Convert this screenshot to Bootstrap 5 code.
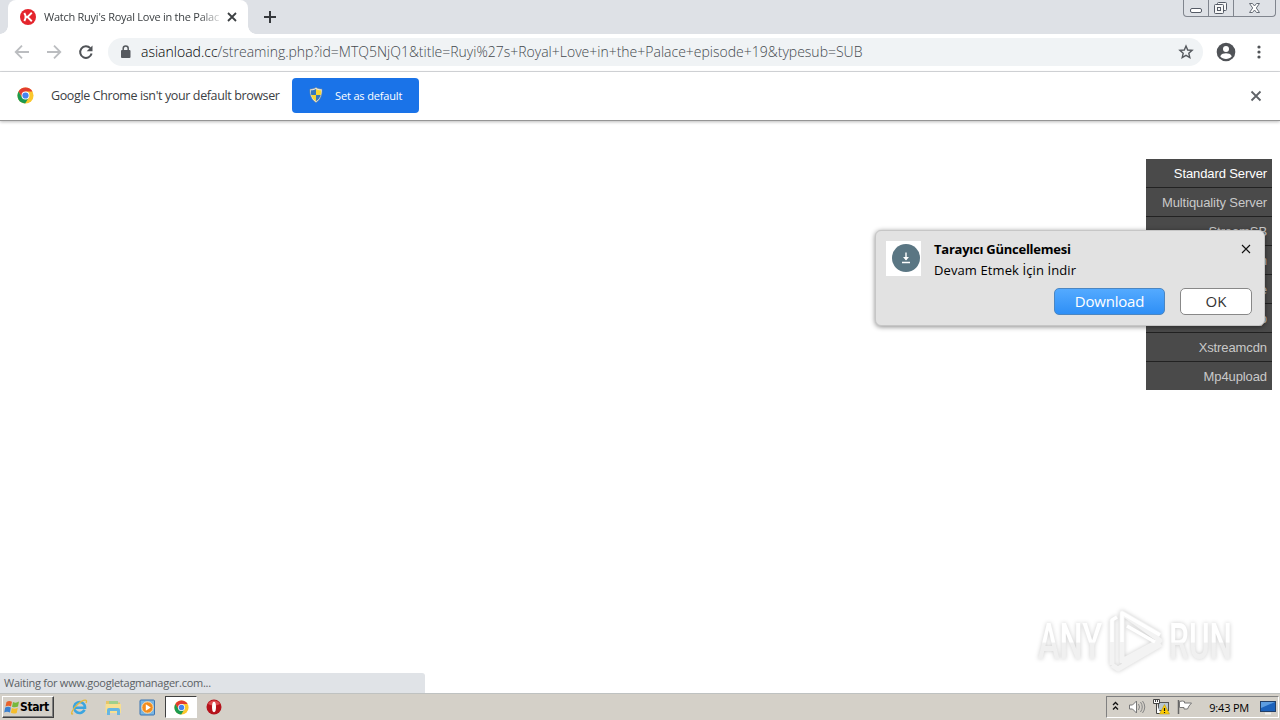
<!DOCTYPE html>
<html lang="en">
<head>
  <meta charset="UTF-8">
  <title>Watch Ruyi's Royal Love in the Palace</title>
  <link href="https://cdn.jsdelivr.net/npm/bootstrap@5.3.3/dist/css/bootstrap.min.css" rel="stylesheet">
  <style>
    body { width: 1280px; height: 720px; font-family: "Open Sans", "Noto Sans", sans-serif; color: #3c4043; line-height: 1; }
    svg { display: block; flex: none; }

    /* browser */
    .tabstrip { height: 34px; background: #dee1e6; padding-left: 8px; }
    .tab-active { width: 240px; height: 34px; background: #fff; border-radius: 8px 8px 0 0; padding: 0 10px 0 12px; }
    .tab-active::before, .tab-active::after { content: ""; position: absolute; bottom: 0; width: 8px; height: 8px; }
    .tab-active::before { left: -8px; background: radial-gradient(circle at 0 0, transparent 7.5px, #fff 8px); }
    .tab-active::after { right: -8px; background: radial-gradient(circle at 100% 0, transparent 7.5px, #fff 8px); }
    .tab-title { width: 175px; margin-left: 8px; font-size: 11px; letter-spacing: -.25px; line-height: 16px;
      -webkit-mask-image: linear-gradient(90deg, #000 155px, transparent 180px); }
    .winbtns { width: 93px; height: 17px; margin-right: 4px; border: 1px solid #80858e; border-top: 0; border-radius: 0 0 4px 4px; }
    .winbtns div + div { border-left: 1px solid #80858e; }
    .toolbar { height: 38px; border-bottom: 1px solid #d8dadd; padding: 0 13px 2px 14px; }
    .omnibox { height: 28px; width: 1095px; margin-left: 14px; padding: 0 9px 0 11px; background: #f0f3f5; border-radius: 14px; }
    .url { font-size: 14px; font-weight: 300; margin-left: 9px; line-height: 20px; color: #44494e; }
    .url b { font-weight: 300; color: #000; }
    .infobar { height: 49px; padding: 0 18px 1px 17px; border-bottom: 1px solid #959595; font-size: 13px; box-shadow: 0 1px 3px #0004; z-index: 1; }
    .infobar .msg { width: 241px; margin-left: 17px; padding-top: 2px; font-size: 12.5px; letter-spacing: -.38px; }
    .btn-default { width: 127px; height: 35px; background: #1a73e8; color: #fff; border-radius: 4px; font-size: 11px; border: 0; padding: 0 0 1px 16px; letter-spacing: -.15px; }

    /* page */
    .servers { width: 126px; right: 8px; top: 38px; background: #4a4a4a; color: #c9c9c9; font: 13px/29px "Liberation Sans", sans-serif; letter-spacing: -.1px; }
    .servers li { height: 28px; padding-right: 5px; box-sizing: content-box; }
    .servers li + li { border-top: 1px solid #222; }
    .servers .current { color: #fff; }
    .notice { width: 390px; height: 96px; left: 875px; top: 109px; background: #e2e2e2; border: 1px solid #c6c6c6; border-radius: 6px; box-shadow: 0 1px 5px #0007; color: #000; padding: 10px 12px 9px 10px; font-size: 13px; }
    .notice .pic { width: 35px; height: 35px; background: #fff; padding: 3px 1px 0 6px; }
    .notice .txt { margin-left: 13px; line-height: 21px; margin-top: -2px; }
    .notice .txt b { font-weight: 700; letter-spacing: -.25px; }
    .notice .txt span { letter-spacing: .1px; }
    .notice .acts { gap: 15px; margin-top: 7px; }
    .notice .btn { height: 27px; border: 1px solid #888; border-radius: 5px; padding: 0; font-size: 15px; line-height: 25px; }
    .btn-dl { width: 111px; background: linear-gradient(#54aaff, #2e8ff6); color: #fff; letter-spacing: -.2px; }
    .btn-dl.btn { border-color: #4b86c2; }
    .btn-ok { width: 72px; background: #fff; color: #333; }
    .watermark { left: 1030px; top: 483px; filter: drop-shadow(0 0 2px #0003); }
    .status { width: 425px; height: 20px; bottom: 0; left: 0; background: #e0e3e7; border-radius: 0 3px 0 0; padding-left: 4px; font-size: 11px; line-height: 20px; letter-spacing: -.26px; color: #5b5f64; }

    /* taskbar */
    .taskbar { height: 27px; background: #d4d0c8; border-top: 1px solid #bfc2c1; padding: 0 1px 0 2px; color: #000; font-size: 11px; }
    .raised { border: 1px solid; border-color: #fff #404040 #404040 #fff; box-shadow: inset -1px -1px #808080; }
    .start { width: 52px; height: 22px; font: bold 12px "DejaVu Sans Condensed", sans-serif; letter-spacing: -.4px; padding-left: 1px; }
    .pressed { width: 32px; height: 22px; background: #fff; border: 1px solid; border-color: #404040 #fff #fff #404040; }
    .quick { gap: 17px; margin-left: 17px; }
    .tray { width: 173px; height: 22px; border: 1px solid; border-color: #808080 #fff #fff #808080; padding: 0 2px 0 5px; }
    .clock { margin-right: 11px; letter-spacing: -.2px; }
  </style>
</head>
<body class="d-flex flex-column overflow-hidden bg-white">

  <svg width="0" height="0" class="position-absolute">
    <symbol id="chrome" viewBox="0 0 18 18">
      <circle cx="9" cy="9" r="8.5" fill="#fbc72d"/>
      <path d="M1.6 4.8A8.5 8.5 0 0 1 16.4 4.8H9L5.4 11Z" fill="#e23c30"/>
      <path d="M1.6 4.8A8.5 8.5 0 0 0 8.600 17.5L12.6 11H5.4Z" fill="#1b9a50"/>
      <circle cx="9" cy="9" r="4.2" fill="#fff"/>
      <circle cx="9" cy="9" r="3.3" fill="#4583ef"/>
    </symbol>
  </svg>

  <div class="tabstrip d-flex align-items-center flex-shrink-0">
    <div class="tab-active position-relative d-flex align-items-center">
      <svg width="16" height="16" viewBox="0 0 16 16"><circle cx="8" cy="8" r="8" fill="#e4252d"/><path d="M4.300 4 5.500 6.500v3L4.300 12M11.800 3.800 7.500 8l4.300 4.200M5.500 8H8" fill="none" stroke="#fff" stroke-width="1.900"/></svg>
      <div class="tab-title text-nowrap overflow-hidden">Watch Ruyi's Royal Love in the Palac</div>
      <svg class="ms-auto me-0" width="12" height="12" viewBox="0 0 12 12"><path d="m2 2 8 8m0-8-8 8" stroke="#3c4043" stroke-width="1.8"/></svg>
    </div>
    <svg style="margin-left:16px" width="12" height="12" viewBox="0 0 12 12"><path d="M6 0v12M0 6h12" stroke="#35383c" stroke-width="2"/></svg>
    <div class="winbtns d-flex ms-auto align-self-start">
      <div class="d-flex"><svg width="24" height="16" viewBox="0 0 24 16"><rect x="6.5" y="8.500" width="11" height="4" rx="1.500" fill="#fff" stroke="#555b66"/></svg></div>
      <div class="d-flex"><svg width="24" height="16" viewBox="0 0 24 16" fill="#f7f7f7" stroke="#555b66"><rect x="8.500" y="2.500" width="9" height="8" rx="1"/><rect x="5.500" y="4.500" width="9" height="9" rx="1"/><rect x="8.500" y="7.500" width="3" height="3"/></svg></div>
      <div class="d-flex"><svg width="40" height="16" viewBox="0 0 40 16"><path d="M15.500 3.500h3l2 2.500 2-2.500h3L22.300 8l3.200 4.500h-3L20.500 10l-2 2.500h-3L18.700 8Z" fill="#fff" stroke="#666c76"/></svg></div>
    </div>
  </div>

  <div class="toolbar d-flex align-items-center flex-shrink-0">
    <svg width="80" height="16" viewBox="0 0 80 16" fill="none" stroke-width="1.8">
      <path d="M15 8H2M8 1.700 1.700 8 8 14.300M33 8h13M40 1.700 46.300 8 40 14.300" stroke="#bbbdc0"/>
      <path d="M76.300 4.200A5.800 5.800 0 1 0 77.600 9.500" stroke="#505357" stroke-width="2"/>
      <path d="M78.500 1.500v5.800h-5.800Z" fill="#505357"/>
    </svg>
    <div class="omnibox d-flex align-items-center">
      <svg width="13" height="14" viewBox="0 0 13 14"><rect x="2" y="5" width="9.500" height="8" rx="1" fill="#55595e"/><path d="M4.200 5.500v-2a2.500 2.500 0 0 1 5 0v2" fill="none" stroke="#55595e" stroke-width="1.500"/></svg>
      <div class="url text-nowrap"><b>asianload.cc</b>/streaming.php?id=MTQ5NjQ1&amp;title=Ruyi%27s+Royal+Love+in+the+Palace+episode+19&amp;typesub=SUB</div>
      <svg class="ms-auto" width="16" height="16" viewBox="0 0 16 16"><path d="m8 2 1.700 4 4.400.4-3.300 2.900 1 4.300L8 11.300l-3.800 2.300 1-4.300-3.300-2.900L6.300 6Z" fill="none" stroke="#55595e" stroke-width="1.400"/></svg>
    </div>
    <svg class="ms-auto" width="20" height="20" viewBox="0 0 20 20"><circle cx="10" cy="10" r="9.300" fill="#505357"/><circle cx="10" cy="7" r="3" fill="#fff"/><path d="M4.200 14.200c1-2.300 3.700-2.900 5.800-2.900s4.800.6 5.800 2.900c-1.300 1.700-3.600 2.800-5.800 2.800s-4.500-1.100-5.800-2.800Z" fill="#fff"/></svg>
    <svg style="margin:0 6px 0 21px" width="4" height="14" viewBox="0 0 4 14" fill="#505357"><circle cx="2" cy="2" r="1.600"/><circle cx="2" cy="7" r="1.600"/><circle cx="2" cy="12" r="1.600"/></svg>
  </div>

  <div class="infobar position-relative d-flex align-items-center flex-shrink-0 bg-white">
    <svg width="17" height="17"><use href="#chrome"/></svg>
    <div class="msg text-nowrap">Google Chrome isn't your default browser</div>
    <button class="btn-default d-flex align-items-center">
      <svg width="16" height="16" viewBox="0 0 16 16"><path d="M8 .5c2 1.300 4 1.700 6 1.600.3 6-1.500 10.500-6 13.400C3.500 12.600 1.700 8.100 2 2.100 4 2.200 6 1.800 8 .5Z" fill="#eee" stroke="#8a8f80" stroke-width=".6"/><path d="M8 2v6H3.200c-.3-1.500-.4-3-.3-4.700C5 3.300 6.500 2.900 8 2Z" fill="#3477be"/><path d="M8 2c1.500.9 3 1.300 5.100 1.300.1 1.700 0 3.200-.3 4.700H8Z" fill="#f6d534"/><path d="M8 8v6.300C5.500 12.700 3.900 10.600 3.200 8Z" fill="#f6d534"/><path d="M8 8v6.300c2.500-1.600 4.100-3.700 4.800-6.300Z" fill="#3477be"/></svg>
      <span style="margin-left:11px">Set as default</span>
    </button>
    <svg class="ms-auto" width="12" height="12" viewBox="0 0 12 12"><path d="m1.500 1.500 9 9m0-9-9 9" stroke="#5f6368" stroke-width="1.800"/></svg>
  </div>

  <main class="position-relative flex-grow-1">
    <ul class="servers position-absolute list-unstyled text-end m-0">
      <li class="current">Standard Server</li>
      <li>Multiquality Server</li>
      <li>StreamSB</li>
      <li>Doodstream</li>
      <li>Streamtape</li>
      <li>Mixdrop</li>
      <li>Xstreamcdn</li>
      <li>Mp4upload</li>
    </ul>

    <div class="notice position-absolute">
      <div class="d-flex">
        <div class="pic"><svg width="28" height="28" viewBox="0 0 28 28"><circle cx="14" cy="14" r="14" fill="#5a7683"/><path d="M14 8.500v7M10 18.500h8" stroke="#fff" stroke-width="1.400"/><path d="M11 13h6l-3 3.500Z" fill="#fff"/></svg></div>
        <div class="txt"><b>Tarayıcı Güncellemesi</b><br><span>Devam Etmek İçin İndir</span></div>
        <svg class="ms-auto" style="margin:3px 1px 0 0" width="10" height="10" viewBox="0 0 10 10"><path d="m1 1 8 8m0-8-8 8" stroke="#111" stroke-width="1.100"/></svg>
      </div>
      <div class="acts d-flex justify-content-end">
        <button class="btn btn-dl">Download</button>
        <button class="btn btn-ok">OK</button>
      </div>
    </div>

    <svg class="watermark position-absolute" width="210" height="74" viewBox="0 0 210 74">
      <defs><linearGradient id="fade" x2="0" y2="1"><stop offset=".5" stop-color="#fff"/><stop offset=".52" stop-color="#f0f0f0"/></linearGradient></defs>
      <g font-family="Roboto, sans-serif" font-weight="500" font-size="50" fill="url(#fade)">
        <text x="8" y="55" textLength="64" lengthAdjust="spacingAndGlyphs">ANY</text>
        <text x="139" y="55" textLength="63" lengthAdjust="spacingAndGlyphs">RUN</text>
      </g>
      <path d="M82 61V16M92 9v48l38-20.500ZM92 9l38 22M82 61l6 4 43-25" fill="none" stroke="#f3f3f3" stroke-width="5" stroke-linejoin="round"/>
      <path d="M82 38V16l5-3M92 38V9l38 22M97 22l28 16" fill="none" stroke="#fff" stroke-width="3.500" stroke-linejoin="round"/>
    </svg>

    <div class="status position-absolute">Waiting for www.googletagmanager.com...</div>
  </main>

  <footer class="taskbar d-flex align-items-center flex-shrink-0">
    <div class="start raised d-flex align-items-center">
      <svg width="16" height="16" viewBox="0 0 16 16"><path d="M2.500 3Q5 1 8 2.700L7 7.500Q4.500 6 1.500 7.500Z" fill="#e8632c"/><path d="M9 3q3 1.500 6-.5L14 7.500q-3 1.500-6 .3Z" fill="#76b83c"/><path d="M1.200 8.500q3-1.500 5.600 0L6 13.500Q3 12 .2 13.500Z" fill="#3b81d0"/><path d="M7.800 9q3 1.500 6-.3L12.700 14q-3 1.300-5.800-.2Z" fill="#f5bd2c"/></svg>
      <span>Start</span>
    </div>
    <div class="quick d-flex align-items-center">
      <svg width="17" height="17" viewBox="0 0 17 17"><path d="M13.500 10.800A5.500 5.500 0 1 1 14 8.700H4" fill="none" stroke="#3ba5e0" stroke-width="2.600"/><path d="M2 14.500C-1 17 1 10 7 5s10-5 8-1" fill="none" stroke="#e5b93c" stroke-width="1.300"/></svg>
      <svg width="17" height="17" viewBox="0 0 17 17"><path d="M1 2h6l1 1.500h7V13H1Z" fill="#e7c567"/><path d="M4 2h9v5H4Z" fill="#9fcf8b"/><path d="M.5 5h15.500v9H.5Z" fill="#f7df91"/><path d="M2 16v-5q0-2 2-2h9q2 0 2 2v5h-3v-4H5v4Z" fill="#67b6e2"/></svg>
      <svg width="17" height="17" viewBox="0 0 17 17"><rect x="1" y="1" width="14.500" height="15" rx="1" fill="#7ab6e2" stroke="#3b75b3"/><circle cx="8.500" cy="8.500" r="5.700" fill="#f28c1c" stroke="#fce0b5"/><path d="M6.800 5.300v6.400l5-3.200Z" fill="#fff"/></svg>
      <div class="pressed d-flex align-items-center justify-content-center" style="margin:0 -8px"><svg width="15" height="15"><use href="#chrome"/></svg></div>
      <svg width="16" height="16" viewBox="0 0 16 16"><circle cx="8" cy="8" r="7.500" fill="#b5121b"/><path d="M2 5a7 7 0 0 1 12 0Q8 8 2 5Z" fill="#de4b50"/><ellipse cx="8" cy="8" rx="2" ry="5.200" fill="#fff"/></svg>
    </div>
    <div class="tray ms-auto d-flex align-items-center">
      <svg width="80" height="18" viewBox="0 0 80 18" fill="none">
        <path d="m1 7 2.500-2.500L6 7M1 11.500 3.500 9 6 11.500" stroke="#111" stroke-width="1.300"/>
        <path d="M17.500 7h3l4-4v12l-4-4h-3Z" fill="#fff" stroke="#777"/><path d="M26.500 6q2 3 0 6M28.500 4q3.500 5 0 10M30.500 3q4.500 6 0 12" stroke="#858585"/>
        <rect x="46.500" y="4.500" width="10" height="8" fill="#b9c7d0" stroke="#555"/><path d="M41.500 1.500h6v4h-6ZM44.500 5.500v10h4" fill="#fff" stroke="#444"/><path d="M43.500 1v3M45.500 1v3" stroke="#444"/><path d="m52.500 6.500 5 9.500h-10Z" fill="#fc0" stroke="#b69a23" stroke-width=".6"/><path d="M52.500 10v3m0 1v1" stroke="#111" stroke-width="1.200"/>
        <path d="M66.500 2v14" stroke="#666" stroke-width="1.500"/><path d="M67.500 3.500q3-1 5 0v1.500h7L77 8l-1.500 3H72V9.500h-4.500Z" fill="#fff" stroke="#777"/>
      </svg>
      <span class="clock ms-auto">9:43 PM</span>
      <svg width="16" height="16" viewBox="0 0 16 16"><rect x=".5" y="2.500" width="15" height="10" fill="#1c62bb" stroke="#223f67"/><path d="M1 3h14L1 9Z" fill="#5d9de0"/><path d="M5 14.500h6" stroke="#eee" stroke-width="2"/></svg>
    </div>
  </footer>

  <script src="https://cdn.jsdelivr.net/npm/bootstrap@5.3.3/dist/js/bootstrap.bundle.min.js"></script>
</body>
</html>
